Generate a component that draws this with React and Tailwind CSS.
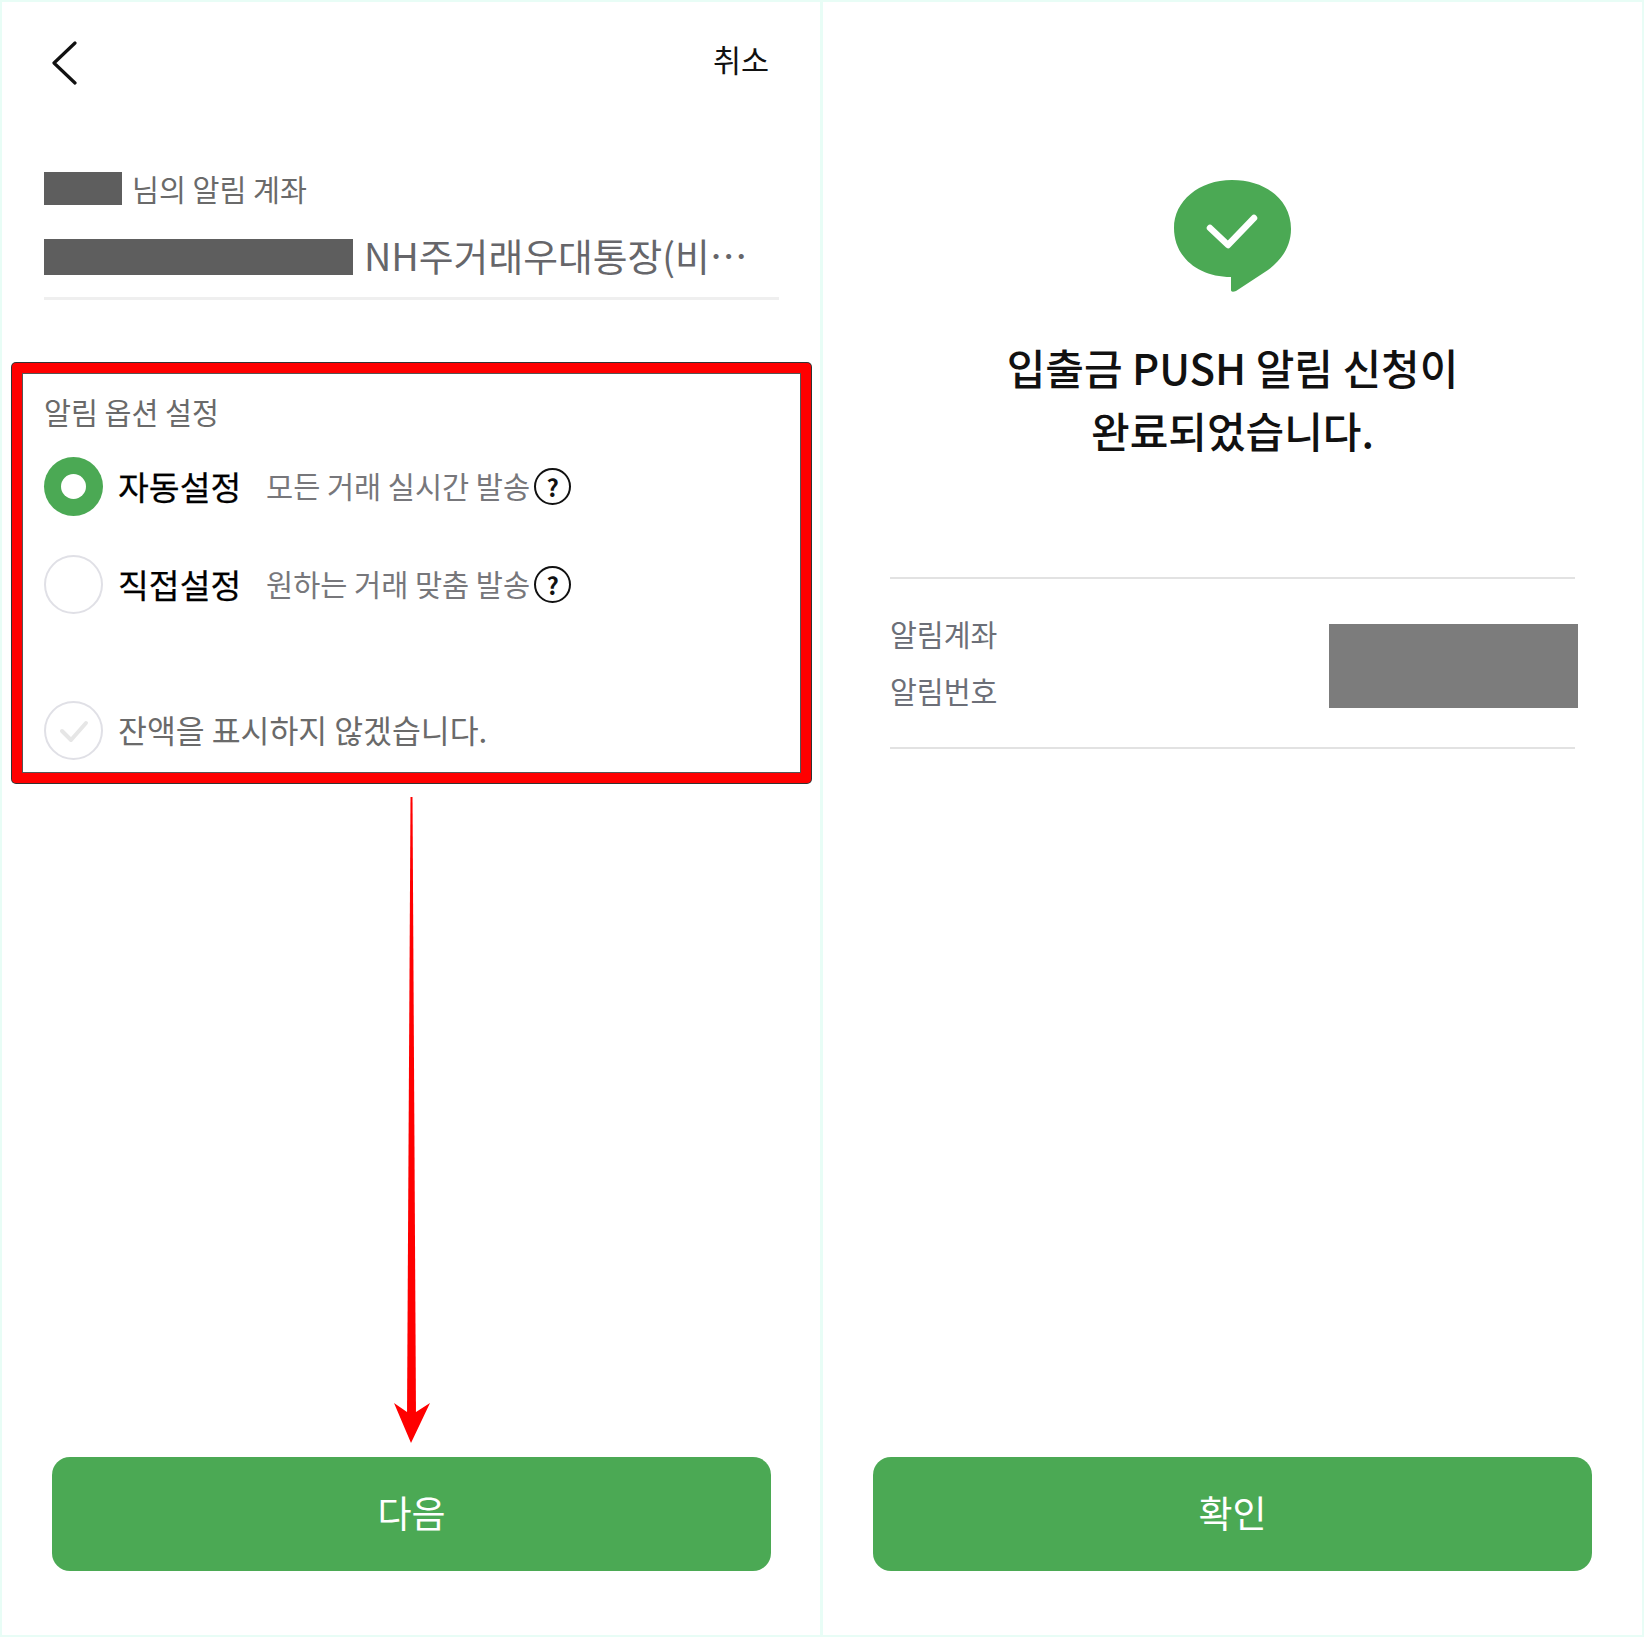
const FONT = "font-['Noto_Sans_CJK_KR','Liberation_Sans',sans-serif]";

function Help() {
  return (
    <span className="ml-[4px] flex h-[37px] w-[37px] shrink-0 items-center justify-center rounded-full border-[2.5px] border-[#111] text-[24px] font-bold leading-none text-[#111]">
      ?
    </span>
  );
}

function OptionRow({ active, label, sub, className }) {
  return (
    <div className={`flex h-[59px] items-center ${className}`}>
      {active ? (
        <span className="flex h-[59px] w-[59px] shrink-0 items-center justify-center rounded-full bg-[#4ba954]">
          <span className="h-[25px] w-[25px] rounded-full bg-white" />
        </span>
      ) : (
        <span className="h-[59px] w-[59px] shrink-0 rounded-full border-2 border-[#e0e0e6]" />
      )}
      <span className="-mt-[2px] ml-[15px] w-[148px] text-[33.5px] font-normal leading-none text-black [-webkit-text-stroke:0.25px_#000]">{label}</span>
      <span className="-mt-[1px] text-[29.5px] leading-none text-[#77777b]">{sub}</span>
      <Help />
    </div>
  );
}

function Arrow() {
  return (
    <svg className="absolute left-[378px] top-[790px]" width="60" height="660" viewBox="0 0 60 660">
      <polygon points="30.5,5 32.5,5 36,625 27,625" fill="#ff0000" />
      <polygon points="14,611 27,620 36,620 50,611 31,651" fill="#ff0000" />
    </svg>
  );
}

export default function App() {
  return (
    <div className={`${FONT} flex h-[1637px] w-[1644px] gap-[3px] bg-[#e8fdf6] p-[2px]`}>
      {/* left panel */}
      <div className="relative flex w-[818px] flex-col bg-white">
        <header className="flex h-[120px] items-start justify-between pl-[50px] pr-[51px] pt-[39px]">
          <svg width="26" height="44" viewBox="0 0 26 44" fill="none" stroke="#111" strokeWidth="3.2" strokeLinecap="round" strokeLinejoin="round">
            <path d="M23 2 L2 22 L23 42" />
          </svg>
          <span className="-mt-[2px] text-[30.5px] leading-[40px] text-[#111]">취소</span>
        </header>

        <section className="ml-[42px] mr-[41px] mt-[50px] border-b-[3px] border-[#efefef] pb-[22px]">
          <div className="flex h-[33px] items-center">
            <span className="h-[33px] w-[78px] bg-[#5e5e5e]" />
            <span className="ml-[10px] text-[29.3px] leading-none text-[#6a6a6a]">님의 알림 계좌</span>
          </div>
          <div className="mt-[34px] flex h-[36px] items-center">
            <span className="h-[36px] w-[309px] shrink-0 bg-[#5e5e5e]" />
            <span className="-mt-[5px] ml-[11px] whitespace-nowrap text-[37.8px] leading-none text-[#66666a]">NH주거래우대통장(비⋯</span>
          </div>
        </section>

        <section className="ml-[10px] mt-[63px] h-[420px] w-[799px] rounded-[4px] border-[10px] border-[#ff0000] bg-white pl-[22px] pt-[18px] shadow-[0_0_0_1px_#333,inset_0_0_0_1px_#555]">
          <h2 className="text-[29.3px] font-normal leading-[40px] text-[#6a6a6a]">알림 옵션 설정</h2>
          <OptionRow active label="자동설정" sub="모든 거래 실시간 발송" className="mt-[26px]" />
          <OptionRow label="직접설정" sub="원하는 거래 맞춤 발송" className="mt-[39px]" />
          <div className="mt-[87px] flex h-[59px] items-center">
            <span className="flex h-[59px] w-[59px] shrink-0 items-center justify-center rounded-full border-2 border-[#e0e0e6]">
              <svg width="30" height="24" viewBox="0 0 30 24" fill="none" stroke="#e6e6e6" strokeWidth="4" strokeLinecap="round" strokeLinejoin="round">
                <path d="M3 12 L12 21 L27 4" />
              </svg>
            </span>
            <span className="-mt-[1px] ml-[15px] text-[31.4px] leading-none text-[#6a6a6a]">잔액을 표시하지 않겠습니다.</span>
          </div>
        </section>

        <button className="mb-[64px] ml-[50px] mr-[49px] mt-auto flex h-[114px] items-center justify-center rounded-[18px] bg-[#4ba954] pb-[4px] text-[37px] leading-none text-white">
          다음
        </button>
        <Arrow />
      </div>

      {/* right panel */}
      <div className="flex w-[819px] flex-col bg-white">
        <svg className="ml-[351px] mt-[178px] shrink-0" width="117" height="112" viewBox="0 0 117 112">
          <path d="M58 0 C93 0 117 21 117 49 C117 68 106 81 94 90 L62 111 C59 112 57 112 57 110 L57 97 C24 97 0 77 0 48 C0 21 25 0 58 0 Z" fill="#4ba954" />
          <path d="M36 48 L54 65 L80 38" fill="none" stroke="#fff" strokeWidth="6.5" strokeLinecap="round" strokeLinejoin="round" />
        </svg>
        <h1 className="mt-[43px] text-center text-[42px] font-medium leading-[63px] text-[#111]">
          입출금 PUSH 알림 신청이
          <br />
          완료되었습니다.
        </h1>
        <div className="mx-[67px] mt-[116px] flex h-[172px] items-center justify-between border-y-2 border-[#e2e2e2]">
          <dl className="-mt-[2px] text-[29.2px] leading-[57px] text-[#6c6f78]">
            <dt>알림계좌</dt>
            <dt>알림번호</dt>
          </dl>
          <span className="-mr-[3px] mt-[6px] h-[84px] w-[249px] bg-[#7c7c7c]" />
        </div>
        <button className="mx-[50px] mb-[64px] mt-auto flex h-[114px] items-center justify-center rounded-[18px] bg-[#4ba954] pb-[4px] text-[37px] leading-none text-white">
          확인
        </button>
      </div>
    </div>
  );
}
